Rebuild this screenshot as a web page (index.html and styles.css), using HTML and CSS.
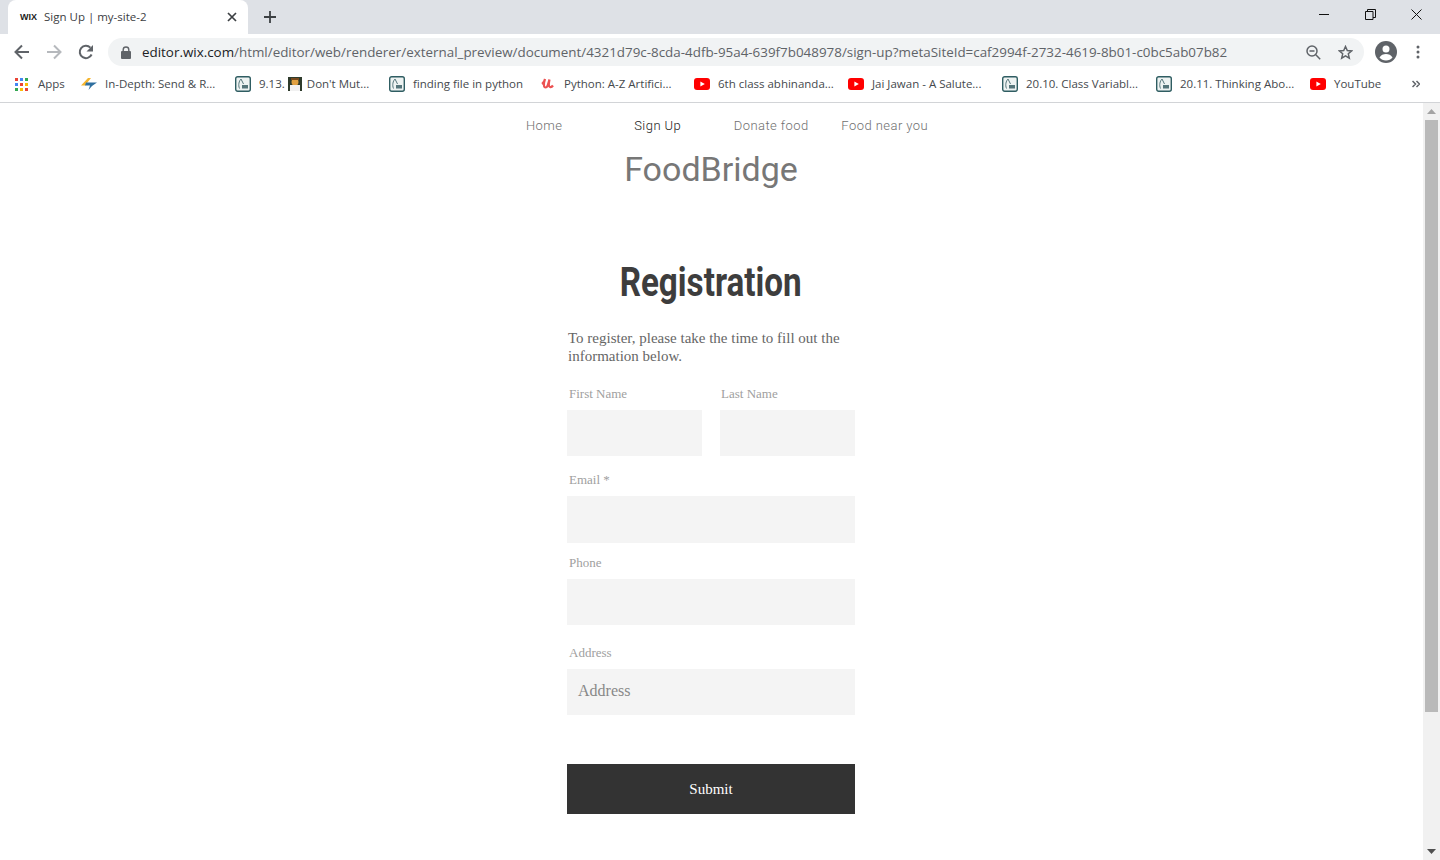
FILE: index.html
```html
<!DOCTYPE html>
<html lang="en">
<head>
    <meta charset="UTF-8">
    <meta name="viewport" content="width=device-width, initial-scale=1.0">
    <title>Sign Up | my-site-2</title>
    <link rel="stylesheet" href="styles.css">
</head>
<body>

<div class="tabstrip">
    <div class="tab">
        <span class="tab-favicon">WIX</span>
        <span class="tab-title">Sign Up | my-site-2</span>
        <svg class="tab-close" width="10" height="10" viewBox="0 0 10 10"><path d="M1 1l8 8M9 1l-8 8" stroke="#3c4043" stroke-width="1.7" fill="none"/></svg>
    </div>
    <svg class="new-tab" width="12" height="12" viewBox="0 0 12 12"><path d="M6 0v12M0 6h12" stroke="#3c4043" stroke-width="1.8" fill="none"/></svg>
    <div class="window-buttons">
        <svg width="11" height="11" viewBox="0 0 11 11"><path d="M0 5.5h10" stroke="#111" fill="none"/></svg>
        <svg width="11" height="11" viewBox="0 0 11 11"><path d="M.5 2.5h7.500v8h-7.500zM2.500 2.500v-2h8v8h-2.500" stroke="#111" fill="none"/></svg>
        <svg width="11" height="11" viewBox="0 0 11 11"><path d="M.5 .5l10 10M10.500 .5l-10 10" stroke="#111" fill="none"/></svg>
    </div>
</div>

<div class="toolbar">
    <svg class="nav-icon" width="16" height="16" viewBox="0 0 16 16"><path d="M15 8H2M8 1.500L1.500 8 8 14.500" stroke="#5f6368" stroke-width="2" fill="none"/></svg>
    <svg class="nav-icon" width="16" height="16" viewBox="0 0 16 16"><path d="M1 8h13M8 1.500L14.500 8 8 14.500" stroke="#b6b9bd" stroke-width="2" fill="none"/></svg>
    <svg class="nav-icon" width="16" height="16" viewBox="0 0 16 16"><path d="M13.600 10.500A6.200 6.200 0 1 1 12.400 3.600" stroke="#5f6368" stroke-width="2" fill="none"/><path d="M15 1v6.500H8.500z" fill="#5f6368"/></svg>
    <div class="omnibox">
        <svg class="lock" width="10" height="13" viewBox="0 0 10 13"><path d="M2.200 6V3.800a2.800 2.800 0 0 1 5.600 0V6" stroke="#5f6368" stroke-width="1.400" fill="none"/><rect y="5" width="10" height="8" rx="1" fill="#5f6368"/></svg>
        <span class="url"><span class="url-host">editor.wix.com</span>/html/editor/web/renderer/external_preview/document/4321d79c-8cda-4dfb-95a4-639f7b048978/sign-up?metaSiteId=caf2994f-2732-4619-8b01-c0bc5ab07b82</span>
        <svg class="omni-icon" width="15" height="15" viewBox="0 0 15 15"><circle cx="6" cy="6" r="5" stroke="#5f6368" stroke-width="1.500" fill="none"/><path d="M3.500 6h5M9.800 9.800l4.400 4.400" stroke="#5f6368" stroke-width="1.500" fill="none"/></svg>
        <svg class="omni-icon" width="15" height="15" viewBox="0 0 15 15"><path d="M7.500 1.500l1.800 4 4.300.4-3.300 2.900 1 4.300-3.800-2.300-3.800 2.300 1-4.300L1.400 5.900l4.300-.4z" stroke="#5f6368" stroke-width="1.500" fill="none"/></svg>
    </div>
    <svg class="avatar" width="22" height="22" viewBox="0 0 22 22"><circle cx="11" cy="11" r="11" fill="#5f6368"/><circle cx="11" cy="8" r="3.500" fill="#fff"/><path d="M4.500 16.500c1.200-2.500 4-3.500 6.500-3.500s5.300 1 6.500 3.500c-1.500 2-3.800 3-6.500 3s-5-1-6.500-3z" fill="#fff"/></svg>
    <svg class="menu-dots" width="4" height="14" viewBox="0 0 4 14"><circle cx="2" cy="2" r="1.500" fill="#5f6368"/><circle cx="2" cy="7" r="1.500" fill="#5f6368"/><circle cx="2" cy="12" r="1.500" fill="#5f6368"/></svg>
</div>

<div class="bookmarks">
    <div class="bm bm-apps">
        <svg width="13" height="13" viewBox="0 0 13 13">
            <path d="M0 0h3v3H0z" fill="#ea4335"/><path d="M5 0h3v3H5z" fill="#4285f4"/><path d="M10 0h3v3h-3z" fill="#34a853"/>
            <path d="M0 5h3v3H0z" fill="#4285f4"/><path d="M5 5h3v3H5z" fill="#ea4335"/><path d="M10 5h3v3h-3z" fill="#fbbc05"/>
            <path d="M0 10h3v3H0z" fill="#34a853"/><path d="M5 10h3v3H5z" fill="#fbbc05"/><path d="M10 10h3v3h-3z" fill="#ea4335"/>
        </svg>
        <span>Apps</span>
    </div>
    <div class="bm">
        <svg width="16" height="12" viewBox="0 0 16 12"><path d="M0 7.500L7 0h3L6 5 4.500 7.500z" fill="#f5b52e"/><path d="M5 4.500h11L11 8l-3.500 4L9 7.500H4z" fill="#2f6f9f"/></svg>
        <span>In-Depth: Send &amp; R...</span>
    </div>
    <div class="bm">
        <svg class="book" width="16" height="16" viewBox="0 0 16 16"><rect x=".7" y=".7" width="14.600" height="14.600" rx="2" fill="#eef3f2" stroke="#2f5d62" stroke-width="1.400"/><path d="M4.500 12.500C3 9 4 5 6 3l2.500 5" stroke="#55757a" fill="none"/><rect x="7" y="9" width="6" height="3.500" fill="#55757a"/></svg>
        <span>9.13.</span>
        <svg class="emoji" width="14" height="14" viewBox="0 0 14 14"><rect width="14" height="14" fill="#2e3b2c"/><circle cx="7" cy="5" r="3.500" fill="#e0a040"/><path d="M3 1h8v2H3z" fill="#7a4a1c"/><rect x="2" y="8" width="10" height="6" fill="#f1f1f1"/></svg>
        <span>Don't Mut...</span>
    </div>
    <div class="bm bm-short">
        <svg class="book" width="16" height="16" viewBox="0 0 16 16"><rect x=".7" y=".7" width="14.600" height="14.600" rx="2" fill="#eef3f2" stroke="#2f5d62" stroke-width="1.400"/><path d="M4.500 12.500C3 9 4 5 6 3l2.500 5" stroke="#55757a" fill="none"/><rect x="7" y="9" width="6" height="3.500" fill="#55757a"/></svg>
        <span>finding file in python</span>
    </div>
    <div class="bm">
        <svg width="16" height="14" viewBox="0 0 16 14"><path d="M2 7c1.500-1 2.500-3 3-5-1 3-1.500 5-1 7 .5 2 2.500 2 3.500 0l2-6.500c-.5 2.500-1 5-.5 6.500.5 1.500 2.500 1.500 4-.5" stroke="#ec5252" stroke-width="2.200" fill="none"/></svg>
        <span>Python: A-Z Artifici...</span>
    </div>
    <div class="bm">
        <svg width="16" height="12" viewBox="0 0 16 12"><rect width="16" height="12" rx="3" fill="#f00"/><path d="M6.400 3.400v5.200L10.800 6z" fill="#fff"/></svg>
        <span>6th class abhinanda...</span>
    </div>
    <div class="bm">
        <svg width="16" height="12" viewBox="0 0 16 12"><rect width="16" height="12" rx="3" fill="#f00"/><path d="M6.400 3.400v5.200L10.800 6z" fill="#fff"/></svg>
        <span>Jai Jawan - A Salute...</span>
    </div>
    <div class="bm">
        <svg class="book" width="16" height="16" viewBox="0 0 16 16"><rect x=".7" y=".7" width="14.600" height="14.600" rx="2" fill="#eef3f2" stroke="#2f5d62" stroke-width="1.400"/><path d="M4.500 12.500C3 9 4 5 6 3l2.500 5" stroke="#55757a" fill="none"/><rect x="7" y="9" width="6" height="3.500" fill="#55757a"/></svg>
        <span>20.10. Class Variabl...</span>
    </div>
    <div class="bm">
        <svg class="book" width="16" height="16" viewBox="0 0 16 16"><rect x=".7" y=".7" width="14.600" height="14.600" rx="2" fill="#eef3f2" stroke="#2f5d62" stroke-width="1.400"/><path d="M4.500 12.500C3 9 4 5 6 3l2.500 5" stroke="#55757a" fill="none"/><rect x="7" y="9" width="6" height="3.500" fill="#55757a"/></svg>
        <span>20.11. Thinking Abo...</span>
    </div>
    <div class="bm">
        <svg width="16" height="12" viewBox="0 0 16 12"><rect width="16" height="12" rx="3" fill="#f00"/><path d="M6.400 3.400v5.200L10.800 6z" fill="#fff"/></svg>
        <span>YouTube</span>
    </div>
    <svg class="bm-more" width="8" height="8" viewBox="0 0 8 8"><path d="M.5 1l3 3-3 3M4.500 1l3 3-3 3" stroke="#5f6368" stroke-width="1.500" fill="none"/></svg>
</div>

<div class="viewport">
    <div class="page">
        <nav class="site-nav">
            <a>Home</a>
            <a class="current">Sign Up</a>
            <a>Donate food</a>
            <a>Food near you</a>
        </nav>
        <div class="site-title">FoodBridge</div>

        <form class="reg-form">
            <div class="reg-heading"><h1>Registration</h1></div>
            <p class="intro">To register, please take the time to fill out the information below.</p>
            <div class="name-row">
                <div>
                    <label>First Name</label>
                    <div class="field"></div>
                </div>
                <div class="name-last">
                    <label>Last Name</label>
                    <div class="field"></div>
                </div>
            </div>
            <label class="label-email">Email *</label>
            <div class="field field-email"></div>
            <label class="label-phone">Phone</label>
            <div class="field"></div>
            <label class="label-address">Address</label>
            <div class="field">Address</div>
            <button type="button" class="submit">Submit</button>
        </form>
    </div>
    <div class="scrollbar">
        <svg width="9" height="5" viewBox="0 0 9 5"><path d="M4.500 0L9 5H0z" fill="#a3a3a3"/></svg>
        <div class="scroll-track"><div class="scroll-thumb"></div></div>
        <svg width="9" height="5" viewBox="0 0 9 5"><path d="M0 0h9L4.500 5z" fill="#505050"/></svg>
    </div>
</div>

</body>
</html>
```

FILE: styles.css
```css
html, body {
    margin: 0;
    padding: 0;
    height: 860px;
    overflow: hidden;
    background: #fff;
}
body {
    font-family: "Open Sans", "Noto Sans", Arial, sans-serif;
    color: #3c4043;
}

/* browser chrome */
.tabstrip {
    display: flex;
    align-items: flex-start;
    height: 34px;
    background-color: #dee1e6;
    padding-left: 8px;
}
.tab {
    display: flex;
    align-items: center;
    box-sizing: border-box;
    width: 240px;
    height: 34px;
    background: #fff;
    border-radius: 8px 8px 0 0;
    padding: 0 11px 0 12px;
}
.tab-favicon {
    width: 24px;
    font-family: "Liberation Sans", Arial, sans-serif;
    font-size: 9px;
    font-weight: bold;
    color: #222;
}
.tab-title {
    flex: 1;
    margin-bottom: 2px;
    font-size: 11.5px;
}
.new-tab {
    margin: 11px 0 0 16px;
}
.window-buttons {
    display: flex;
    gap: 35px;
    margin: 9px 18px 0 auto;
}
.toolbar {
    display: flex;
    align-items: center;
    box-sizing: border-box;
    height: 34px;
    padding: 2px 0 0 14px;
}
.nav-icon {
    margin-right: 16px;
}
.omnibox {
    display: flex;
    align-items: center;
    box-sizing: border-box;
    width: 1256px;
    height: 28px;
    margin-left: -2px;
    background-color: #f1f3f4;
    border-radius: 14px;
    padding: 0 11px 0 13px;
}
.url {
    flex: 1;
    margin-left: 11px;
    font-size: 13.4px;
    color: #5f6368;
    white-space: nowrap;
}
.url-host {
    color: #202124;
}
.omni-icon {
    margin-left: 17px;
}
.avatar {
    margin-left: 11px;
}
.menu-dots {
    margin-left: 19px;
}
.bookmarks {
    display: flex;
    align-items: center;
    box-sizing: border-box;
    height: 35px;
    border-bottom: 1px solid #d2d4d7;
    padding: 0 0 2px 15px;
    font-size: 11.5px;
    color: #45494d;
}
.bm {
    display: flex;
    align-items: center;
    flex: none;
    width: 154px;
    gap: 8px;
    white-space: nowrap;
    overflow: hidden;
}
.bm span {
    margin-bottom: 2px;
}
.bm-apps {
    width: 66px;
    gap: 10px;
}
.bm-short {
    width: 151px;
}
.bm .emoji {
    margin-left: -5px;
    margin-right: -3px;
}
.bm-more {
    margin-left: -52px;
}

/* page */
.viewport {
    display: flex;
    height: 757px;
}
.page {
    flex: 1;
    overflow: hidden;
    padding-right: 1px;
}
.site-nav {
    display: grid;
    grid-template-columns: repeat(4, 113.5px);
    justify-content: center;
    padding: 14px 0 0 7px;
    font-family: Roboto, sans-serif;
    font-size: 13px;
    font-weight: 300;
    letter-spacing: 0.45px;
    line-height: 17px;
    color: #6f6f6f;
    text-align: center;
}
.site-nav .current {
    color: #222;
}
.site-title {
    margin-top: 13px;
    font-family: Roboto, sans-serif;
    font-size: 34px;
    line-height: 44px;
    color: #777;
    text-align: center;
}
.reg-form {
    width: 288px;
    margin: 0 auto;
    font-family: "Liberation Serif", serif;
}
.reg-heading {
    margin-top: 67px;
    text-align: center;
}
/* no condensed face is installed, so squeeze the bold one */
.reg-heading h1 {
    display: inline-block;
    margin: 0;
    transform: scaleX(0.83);
    font-family: Roboto, sans-serif;
    font-size: 40px;
    font-weight: bold;
    line-height: 50px;
    color: #3d3d3d;
}
.intro {
    margin: 21px 0 0;
    padding-left: 1px;
    font-size: 15px;
    line-height: 18px;
    color: #666;
}
.name-row {
    display: grid;
    grid-template-columns: 135px 135px;
    gap: 18px;
    margin-top: 20px;
}
.reg-form label {
    display: block;
    padding-left: 2px;
    font-size: 13px;
    line-height: 18px;
    color: #a0a0a0;
}
.reg-form .name-last label {
    padding-left: 1px;
}
.name-row label {
    margin-bottom: 7px;
}
.label-email, .label-phone, .label-address {
    margin-bottom: 7px;
}
.label-email {
    margin-top: 15px;
}
.label-phone {
    margin-top: 11px;
}
.label-address {
    margin-top: 19px;
}
.field {
    box-sizing: border-box;
    height: 46px;
    padding-left: 11px;
    background-color: #f4f4f4;
    font-size: 16px;
    line-height: 44px;
    color: #888;
}
.field-email {
    height: 47px;
}
.submit {
    display: block;
    width: 100%;
    height: 50px;
    margin-top: 49px;
    border: none;
    background-color: #333;
    font-family: "Liberation Serif", serif;
    font-size: 15px;
    color: #fff;
}

.scrollbar {
    display: flex;
    flex-direction: column;
    align-items: center;
    flex: none;
    box-sizing: border-box;
    width: 17px;
    padding: 6px 0;
    background-color: #f1f1f1;
}
.scroll-track {
    flex: 1;
    width: 100%;
}
.scroll-thumb {
    width: 13px;
    height: 592px;
    margin: 6px auto 0;
    background-color: #b9b9b9;
}
```
